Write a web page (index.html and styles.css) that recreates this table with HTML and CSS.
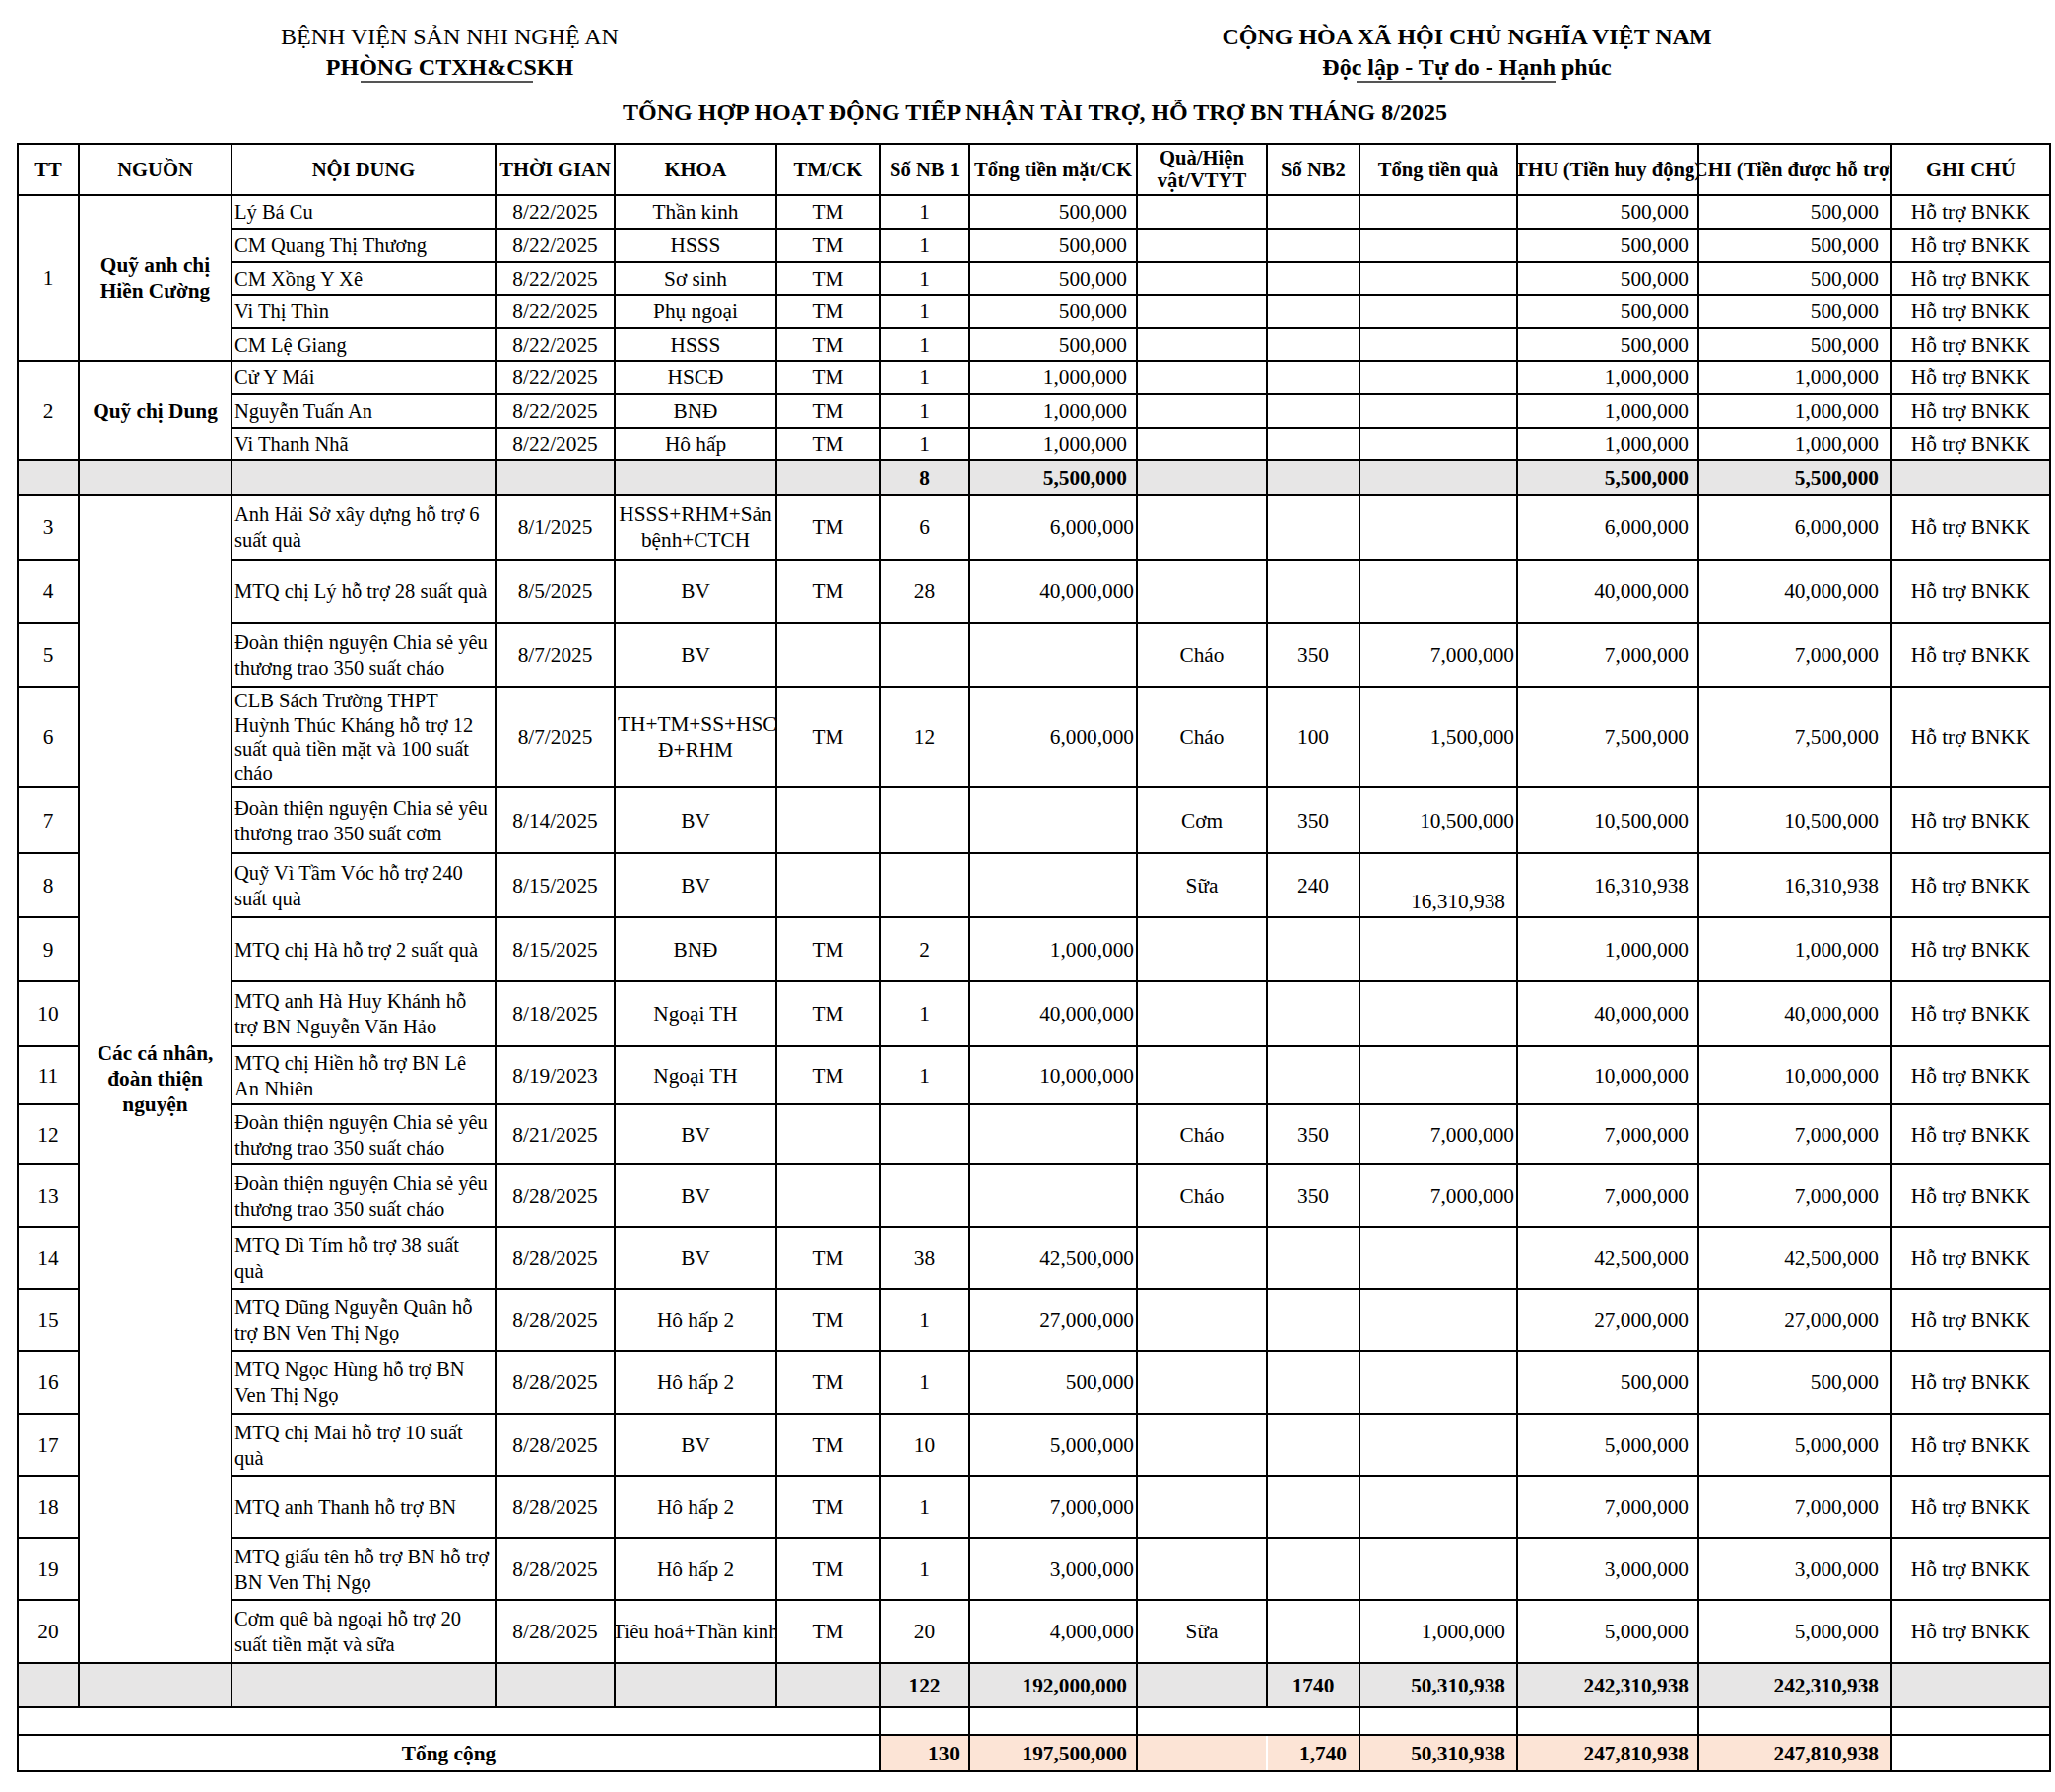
FILE: index.html
```html
<!DOCTYPE html>
<html lang="vi">
<head>
<meta charset="utf-8">
<title>Tổng hợp hoạt động tiếp nhận tài trợ</title>
<link rel="stylesheet" href="styles.css">
</head>
<body>
<div class="top">
  <div class="top-left">
    <div class="hline">BỆNH VIỆN SẢN NHI NGHỆ AN</div>
    <div class="hline b"><span class="ul ul-left">PHÒNG CTXH&amp;CSKH</span></div>
  </div>
  <div class="top-right">
    <div class="hline b">CỘNG HÒA XÃ HỘI CHỦ NGHĨA VIỆT NAM</div>
    <div class="hline b"><span class="ul ul-right">Độc lập - Tự do - Hạnh phúc</span></div>
  </div>
</div>
<div class="title">TỔNG HỢP HOẠT ĐỘNG TIẾP NHẬN TÀI TRỢ, HỖ TRỢ BN THÁNG 8/2025</div>

<table class="sheet">
  <colgroup>
    <col class="w-tt"><col class="w-nguon"><col class="w-nd"><col class="w-tg"><col class="w-khoa"><col class="w-tm"><col class="w-nb1"><col class="w-tien"><col class="w-qua"><col class="w-nb2"><col class="w-tq"><col class="w-thu"><col class="w-chi"><col class="w-gc">
  </colgroup>
  <thead>
    <tr class="h52">
      <th>TT</th><th>NGUỒN</th><th>NỘI DUNG</th><th>THỜI GIAN</th><th>KHOA</th><th>TM/CK</th><th>Số NB 1</th><th>Tổng tiền mặt/CK</th><th class="lh23">Quà/Hiện<br>vật/VTYT</th><th>Số NB2</th><th>Tổng tiền quà</th>
      <th><div class="ofl">THU (Tiền huy động)</div></th><th><div class="ofl">CHI (Tiền được hỗ trợ)</div></th><th>GHI CHÚ</th>
    </tr>
  </thead>
  <tbody>
    <tr class="h34"><td class="c" rowspan="5">1</td><td class="c b" rowspan="5">Quỹ anh chị<br>Hiền Cường</td><td class="l">Lý Bá Cu</td><td class="c">8/22/2025</td><td class="c">Thần kinh</td><td class="c">TM</td><td class="c">1</td><td class="r">500,000</td><td></td><td></td><td></td><td class="r">500,000</td><td class="r r12">500,000</td><td class="c">Hỗ trợ BNKK</td></tr>
    <tr class="h34"><td class="l">CM Quang Thị Thương</td><td class="c">8/22/2025</td><td class="c">HSSS</td><td class="c">TM</td><td class="c">1</td><td class="r">500,000</td><td></td><td></td><td></td><td class="r">500,000</td><td class="r r12">500,000</td><td class="c">Hỗ trợ BNKK</td></tr>
    <tr class="h33"><td class="l">CM Xồng Y Xê</td><td class="c">8/22/2025</td><td class="c">Sơ sinh</td><td class="c">TM</td><td class="c">1</td><td class="r">500,000</td><td></td><td></td><td></td><td class="r">500,000</td><td class="r r12">500,000</td><td class="c">Hỗ trợ BNKK</td></tr>
    <tr class="h34"><td class="l">Vi Thị Thìn</td><td class="c">8/22/2025</td><td class="c">Phụ ngoại</td><td class="c">TM</td><td class="c">1</td><td class="r">500,000</td><td></td><td></td><td></td><td class="r">500,000</td><td class="r r12">500,000</td><td class="c">Hỗ trợ BNKK</td></tr>
    <tr class="h33"><td class="l">CM Lệ Giang</td><td class="c">8/22/2025</td><td class="c">HSSS</td><td class="c">TM</td><td class="c">1</td><td class="r">500,000</td><td></td><td></td><td></td><td class="r">500,000</td><td class="r r12">500,000</td><td class="c">Hỗ trợ BNKK</td></tr>

    <tr class="h34"><td class="c" rowspan="3">2</td><td class="c b" rowspan="3">Quỹ chị Dung</td><td class="l">Cử Y Mái</td><td class="c">8/22/2025</td><td class="c">HSCĐ</td><td class="c">TM</td><td class="c">1</td><td class="r">1,000,000</td><td></td><td></td><td></td><td class="r">1,000,000</td><td class="r r12">1,000,000</td><td class="c">Hỗ trợ BNKK</td></tr>
    <tr class="h34"><td class="l">Nguyễn Tuấn An</td><td class="c">8/22/2025</td><td class="c">BNĐ</td><td class="c">TM</td><td class="c">1</td><td class="r">1,000,000</td><td></td><td></td><td></td><td class="r">1,000,000</td><td class="r r12">1,000,000</td><td class="c">Hỗ trợ BNKK</td></tr>
    <tr class="h33"><td class="l">Vi Thanh Nhã</td><td class="c">8/22/2025</td><td class="c">Hô hấp</td><td class="c">TM</td><td class="c">1</td><td class="r">1,000,000</td><td></td><td></td><td></td><td class="r">1,000,000</td><td class="r r12">1,000,000</td><td class="c">Hỗ trợ BNKK</td></tr>

    <tr class="h35 gray b"><td></td><td></td><td></td><td></td><td></td><td></td><td class="c">8</td><td class="r">5,500,000</td><td></td><td></td><td></td><td class="r">5,500,000</td><td class="r r12">5,500,000</td><td></td></tr>

    <tr class="h66"><td class="c">3</td><td class="c b" rowspan="18">Các cá nhân,<br>đoàn thiện<br>nguyện</td><td class="l">Anh Hải Sở xây dựng hỗ trợ 6<br>suất quà</td><td class="c">8/1/2025</td><td class="c">HSSS+RHM+Sản<br>bệnh+CTCH</td><td class="c">TM</td><td class="c">6</td><td class="rt">6,000,000</td><td></td><td></td><td></td><td class="r">6,000,000</td><td class="r r12">6,000,000</td><td class="c">Hỗ trợ BNKK</td></tr>
    <tr class="h64"><td class="c">4</td><td class="l">MTQ chị Lý hỗ trợ 28 suất quà</td><td class="c">8/5/2025</td><td class="c">BV</td><td class="c">TM</td><td class="c">28</td><td class="rt">40,000,000</td><td></td><td></td><td></td><td class="r">40,000,000</td><td class="r r12">40,000,000</td><td class="c">Hỗ trợ BNKK</td></tr>
    <tr class="h65"><td class="c">5</td><td class="l">Đoàn thiện nguyện Chia sẻ yêu<br>thương trao 350 suất cháo</td><td class="c">8/7/2025</td><td class="c">BV</td><td></td><td></td><td></td><td class="c">Cháo</td><td class="c">350</td><td class="rt">7,000,000</td><td class="r">7,000,000</td><td class="r r12">7,000,000</td><td class="c">Hỗ trợ BNKK</td></tr>
    <tr class="h102"><td class="c">6</td><td class="l lh25">CLB Sách Trường THPT<br>Huỳnh Thúc Kháng hỗ trợ 12<br>suất quà tiền mặt và 100 suất<br>cháo</td><td class="c">8/7/2025</td><td class="c">TH+TM+SS+HSC<br>Đ+RHM</td><td class="c">TM</td><td class="c">12</td><td class="rt">6,000,000</td><td class="c">Cháo</td><td class="c">100</td><td class="rt">1,500,000</td><td class="r">7,500,000</td><td class="r r12">7,500,000</td><td class="c">Hỗ trợ BNKK</td></tr>
    <tr class="h67"><td class="c">7</td><td class="l">Đoàn thiện nguyện Chia sẻ yêu<br>thương trao 350 suất cơm</td><td class="c">8/14/2025</td><td class="c">BV</td><td></td><td></td><td></td><td class="c">Cơm</td><td class="c">350</td><td class="rt">10,500,000</td><td class="r">10,500,000</td><td class="r r12">10,500,000</td><td class="c">Hỗ trợ BNKK</td></tr>
    <tr class="h65"><td class="c">8</td><td class="l">Quỹ Vì Tầm Vóc hỗ trợ 240<br>suất quà</td><td class="c">8/15/2025</td><td class="c">BV</td><td></td><td></td><td></td><td class="c">Sữa</td><td class="c">240</td><td class="r r11 bot">16,310,938</td><td class="r">16,310,938</td><td class="r r12">16,310,938</td><td class="c">Hỗ trợ BNKK</td></tr>
    <tr class="h65"><td class="c">9</td><td class="l">MTQ chị Hà hỗ trợ 2 suất quà</td><td class="c">8/15/2025</td><td class="c">BNĐ</td><td class="c">TM</td><td class="c">2</td><td class="rt">1,000,000</td><td></td><td></td><td></td><td class="r">1,000,000</td><td class="r r12">1,000,000</td><td class="c">Hỗ trợ BNKK</td></tr>
    <tr class="h66"><td class="c">10</td><td class="l">MTQ anh Hà Huy Khánh hỗ<br>trợ BN Nguyễn Văn Hảo</td><td class="c">8/18/2025</td><td class="c">Ngoại TH</td><td class="c">TM</td><td class="c">1</td><td class="rt">40,000,000</td><td></td><td></td><td></td><td class="r">40,000,000</td><td class="r r12">40,000,000</td><td class="c">Hỗ trợ BNKK</td></tr>
    <tr class="h59"><td class="c">11</td><td class="l">MTQ chị Hiền hỗ trợ BN Lê<br>An Nhiên</td><td class="c">8/19/2023</td><td class="c">Ngoại TH</td><td class="c">TM</td><td class="c">1</td><td class="rt">10,000,000</td><td></td><td></td><td></td><td class="r">10,000,000</td><td class="r r12">10,000,000</td><td class="c">Hỗ trợ BNKK</td></tr>
    <tr class="h61"><td class="c">12</td><td class="l">Đoàn thiện nguyện Chia sẻ yêu<br>thương trao 350 suất cháo</td><td class="c">8/21/2025</td><td class="c">BV</td><td></td><td></td><td></td><td class="c">Cháo</td><td class="c">350</td><td class="rt">7,000,000</td><td class="r">7,000,000</td><td class="r r12">7,000,000</td><td class="c">Hỗ trợ BNKK</td></tr>
    <tr class="h63"><td class="c">13</td><td class="l">Đoàn thiện nguyện Chia sẻ yêu<br>thương trao 350 suất cháo</td><td class="c">8/28/2025</td><td class="c">BV</td><td></td><td></td><td></td><td class="c">Cháo</td><td class="c">350</td><td class="rt">7,000,000</td><td class="r">7,000,000</td><td class="r r12">7,000,000</td><td class="c">Hỗ trợ BNKK</td></tr>
    <tr class="h63"><td class="c">14</td><td class="l">MTQ Dì Tím hỗ trợ 38 suất<br>quà</td><td class="c">8/28/2025</td><td class="c">BV</td><td class="c">TM</td><td class="c">38</td><td class="rt">42,500,000</td><td></td><td></td><td></td><td class="r">42,500,000</td><td class="r r12">42,500,000</td><td class="c">Hỗ trợ BNKK</td></tr>
    <tr class="h63"><td class="c">15</td><td class="l">MTQ Dũng Nguyễn Quân hỗ<br>trợ BN Ven Thị Ngọ</td><td class="c">8/28/2025</td><td class="c">Hô hấp 2</td><td class="c">TM</td><td class="c">1</td><td class="rt">27,000,000</td><td></td><td></td><td></td><td class="r">27,000,000</td><td class="r r12">27,000,000</td><td class="c">Hỗ trợ BNKK</td></tr>
    <tr class="h64"><td class="c">16</td><td class="l">MTQ Ngọc Hùng hỗ trợ BN<br>Ven Thị Ngọ</td><td class="c">8/28/2025</td><td class="c">Hô hấp 2</td><td class="c">TM</td><td class="c">1</td><td class="rt">500,000</td><td></td><td></td><td></td><td class="r">500,000</td><td class="r r12">500,000</td><td class="c">Hỗ trợ BNKK</td></tr>
    <tr class="h63"><td class="c">17</td><td class="l">MTQ chị Mai hỗ trợ 10 suất<br>quà</td><td class="c">8/28/2025</td><td class="c">BV</td><td class="c">TM</td><td class="c">10</td><td class="rt">5,000,000</td><td></td><td></td><td></td><td class="r">5,000,000</td><td class="r r12">5,000,000</td><td class="c">Hỗ trợ BNKK</td></tr>
    <tr class="h63"><td class="c">18</td><td class="l">MTQ anh Thanh hỗ trợ BN</td><td class="c">8/28/2025</td><td class="c">Hô hấp 2</td><td class="c">TM</td><td class="c">1</td><td class="rt">7,000,000</td><td></td><td></td><td></td><td class="r">7,000,000</td><td class="r r12">7,000,000</td><td class="c">Hỗ trợ BNKK</td></tr>
    <tr class="h63"><td class="c">19</td><td class="l">MTQ giấu tên hỗ trợ BN hỗ trợ<br>BN Ven Thị Ngọ</td><td class="c">8/28/2025</td><td class="c">Hô hấp 2</td><td class="c">TM</td><td class="c">1</td><td class="rt">3,000,000</td><td></td><td></td><td></td><td class="r">3,000,000</td><td class="r r12">3,000,000</td><td class="c">Hỗ trợ BNKK</td></tr>
    <tr class="h64"><td class="c">20</td><td class="l">Cơm quê bà ngoại hỗ trợ 20<br>suất tiền mặt và sữa</td><td class="c">8/28/2025</td><td class="c sm"><div class="ofl">Tiêu hoá+Thần kinh</div></td><td class="c">TM</td><td class="c">20</td><td class="rt">4,000,000</td><td class="c">Sữa</td><td></td><td class="r r11">1,000,000</td><td class="r">5,000,000</td><td class="r r12">5,000,000</td><td class="c">Hỗ trợ BNKK</td></tr>

    <tr class="h45 gray b"><td></td><td></td><td></td><td></td><td></td><td></td><td class="c">122</td><td class="r">192,000,000</td><td></td><td class="c">1740</td><td class="r r11">50,310,938</td><td class="r">242,310,938</td><td class="r r12">242,310,938</td><td></td></tr>

    <tr class="h28"><td colspan="6"></td><td></td><td></td><td colspan="2"></td><td></td><td></td><td></td><td></td></tr>

    <tr class="h37 b"><td class="c" colspan="6">Tổng cộng</td><td class="r peach">130</td><td class="r peach">197,500,000</td><td class="peach wr"></td><td class="r r12 peach wl">1,740</td><td class="r r11 peach">50,310,938</td><td class="r peach">247,810,938</td><td class="r r12 peach">247,810,938</td><td></td></tr>
  </tbody>
</table>
</body>
</html>
```

FILE: styles.css
```css
html, body {
  margin: 0;
  padding: 0;
  background: #ffffff;
}

body {
  font-family: "Liberation Serif", "Times New Roman", serif;
  font-size: 21.3px;
  color: #000000;
  width: 2086px;
}

.b { font-weight: bold; }

/* ---------- page header ---------- */
.top {
  display: flex;
  margin-left: 18px;
  padding-top: 22px;
}

.top-left {
  width: 877px;
  text-align: center;
}

.top-right {
  width: 1188px;
  text-align: center;
}

.hline {
  font-size: 24px;
  line-height: 31px;
  white-space: nowrap;
}

.ul {
  position: relative;
  display: inline-block;
}

.ul::after {
  content: "";
  position: absolute;
  top: 29px;
  height: 2px;
  background: #555555;
}

.ul-left::after {
  left: 35px;
  width: 175px;
}

.ul-right::after {
  left: 35px;
  width: 202px;
}

.title {
  width: 2065px;
  margin: 15px 0 0 18px;
  text-align: center;
  font-weight: bold;
  font-size: 24px;
  line-height: 31px;
  white-space: nowrap;
}

/* ---------- sheet ---------- */
.sheet {
  margin: 15px 0 0 17px;
  border-collapse: collapse;
  table-layout: fixed;
  width: 2063px;
  font-size: 21.3px;
}

.w-tt    { width: 62px; }
.w-nguon { width: 155px; }
.w-nd    { width: 268px; }
.w-tg    { width: 121px; }
.w-khoa  { width: 164px; }
.w-tm    { width: 105px; }
.w-nb1   { width: 91px; }
.w-tien  { width: 170px; }
.w-qua   { width: 132px; }
.w-nb2   { width: 94px; }
.w-tq    { width: 160px; }
.w-thu   { width: 184px; }
.w-chi   { width: 196px; }
.w-gc    { width: 161px; }

.sheet th,
.sheet td {
  border: 2px solid #000000;
  padding: 0 2px;
  vertical-align: middle;
  white-space: nowrap;
  line-height: 26px;
  overflow: hidden;
}

.sheet th {
  font-weight: bold;
  text-align: center;
  line-height: 24px;
  font-size: 20.6px;
}

.sheet th.lh23 { line-height: 23px; }

.ofl {
  display: flex;
  justify-content: center;
  overflow: hidden;
  white-space: nowrap;
  margin: 0 -2px;
}

.c { text-align: center; }
.sheet td.l { text-align: left; font-size: 20.5px; }
.sheet td.lh25 { line-height: 24.5px; }
.sheet td.sm { font-size: 20.8px; }
.sheet td.r { text-align: right; padding-right: 9px; }
.sheet td.r11 { padding-right: 11px; }
.sheet td.r12 { padding-right: 12px; }
.sheet td.rt { text-align: right; padding-right: 2px; }
.sheet td.bot { vertical-align: bottom; padding-bottom: 2px; }

.gray td { background: #e7e6e6; }
.sheet td.peach { background: #fce4d6; }
.sheet td.wr { border-right-color: #ffffff; }
.sheet td.wl { border-left-color: #ffffff; }

/* row heights */
.h28 { height: 28px; }
.h33 { height: 33px; }
.h34 { height: 34px; }
.h35 { height: 35px; }
.h37 { height: 37px; }
.h45 { height: 45px; }
.h52 { height: 52px; }
.h59 { height: 59px; }
.h61 { height: 61px; }
.h63 { height: 63px; }
.h64 { height: 64px; }
.h65 { height: 65px; }
.h66 { height: 66px; }
.h67 { height: 67px; }
.h102 { height: 102px; }
```
